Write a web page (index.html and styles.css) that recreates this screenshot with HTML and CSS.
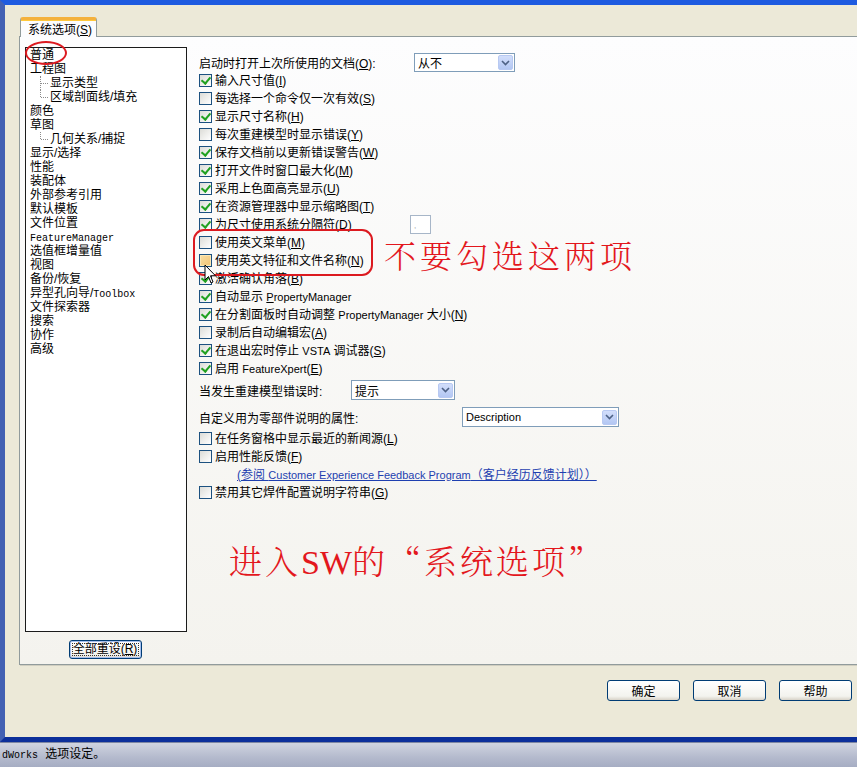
FILE: index.html
```html
<!DOCTYPE html>
<html>
<head>
	<meta charset="utf-8">
	<title>系统选项 - 普通</title>
	<link rel="stylesheet" href="styles.css">
</head>
<body>
	<div class="window">
		<div class="tab">系统选项(<u>S</u>)</div>
		<div class="panel">
			<div class="left">
				<ul class="tree">
					<li>普通</li>
					<li>工程图</li>
					<li class="sub">显示类型</li>
					<li class="sub last">区域剖面线/填充</li>
					<li>颜色</li>
					<li>草图</li>
					<li class="sub last">几何关系/捕捉</li>
					<li>显示/选择</li>
					<li>性能</li>
					<li>装配体</li>
					<li>外部参考引用</li>
					<li>默认模板</li>
					<li>文件位置</li>
					<li><span class="en">FeatureManager</span></li>
					<li>选值框增量值</li>
					<li>视图</li>
					<li>备份/恢复</li>
					<li>异型孔向导/<span class="en">Toolbox</span></li>
					<li>文件探索器</li>
					<li>搜索</li>
					<li>协作</li>
					<li>高级</li>
				</ul>
				<button class="btn reset">全部重设(<u>R</u>)</button>
			</div>
			<div class="right">
				<div class="line first">
					<span class="lbl open_doc">启动时打开上次所使用的文档(<u>O</u>):</span>
					<div class="combo never">从不<span class="arrow"><svg width="9" height="6" viewBox="0 0 9 6"><path d="M1 1 L4.5 4.5 L8 1" fill="none" stroke="#4D6185" stroke-width="1.6"/></svg></span></div>
				</div>
				<div class="chk"><span class="cb on"></span>输入尺寸值(<u>I</u>)</div>
				<div class="chk"><span class="cb"></span>每选择一个命令仅一次有效(<u>S</u>)</div>
				<div class="chk"><span class="cb on"></span>显示尺寸名称(<u>H</u>)</div>
				<div class="chk"><span class="cb"></span>每次重建模型时显示错误(<u>Y</u>)</div>
				<div class="chk"><span class="cb on"></span>保存文档前以更新错误警告(<u>W</u>)</div>
				<div class="chk"><span class="cb on"></span>打开文件时窗口最大化(<u>M</u>)</div>
				<div class="chk"><span class="cb on"></span>采用上色面高亮显示(<u>U</u>)</div>
				<div class="chk"><span class="cb on"></span>在资源管理器中显示缩略图(<u>T</u>)</div>
				<div class="chk sep_row">
					<span class="sep_lbl"><span class="cb on"></span>为尺寸使用系统分隔符(<u>D</u>)</span>
					<span class="sep_box">,</span>
				</div>
				<div class="chk"><span class="cb"></span>使用英文菜单(<u>M</u>)</div>
				<div class="chk"><span class="cb hot"></span>使用英文特征和文件名称(<u>N</u>)</div>
				<div class="chk"><span class="cb on"></span>激活确认角落(<u>B</u>)</div>
				<div class="chk"><span class="cb on"></span>自动显示 <span class="lt"><u>P</u>ropertyManager</span></div>
				<div class="chk"><span class="cb on"></span>在分割面板时自动调整 <span class="lt">PropertyManager</span> 大小(<u>N</u>)</div>
				<div class="chk"><span class="cb"></span>录制后自动编辑宏(<u>A</u>)</div>
				<div class="chk"><span class="cb on"></span>在退出宏时停止 <span class="lt">VSTA</span> 调试器(<u>S</u>)</div>
				<div class="chk"><span class="cb on"></span>启用 <span class="lt">FeatureXpert</span>(<u>E</u>)</div>
				<div class="line rebuild">
					<span class="lbl rebuild_lbl">当发生重建模型错误时:</span>
					<div class="combo prompt">提示<span class="arrow"><svg width="9" height="6" viewBox="0 0 9 6"><path d="M1 1 L4.5 4.5 L8 1" fill="none" stroke="#4D6185" stroke-width="1.6"/></svg></span></div>
				</div>
				<div class="line desc">
					<span class="lbl desc_lbl">自定义用为零部件说明的属性:</span>
					<div class="combo description"><span class="lt">Description</span><span class="arrow"><svg width="9" height="6" viewBox="0 0 9 6"><path d="M1 1 L4.5 4.5 L8 1" fill="none" stroke="#4D6185" stroke-width="1.6"/></svg></span></div>
				</div>
				<div class="chk gap"><span class="cb"></span>在任务窗格中显示最近的新闻源(<u>L</u>)</div>
				<div class="chk"><span class="cb"></span>启用性能反馈(<u>F</u>)</div>
				<div class="chk link_row"><a class="link">(参阅 <span class="lt">Customer Experience Feedback Program</span>（客户经历反馈计划））</a></div>
				<div class="chk"><span class="cb"></span>禁用其它焊件配置说明字符串(<u>G</u>)</div>
			</div>

			<div class="mark oval"></div>
			<div class="mark box"></div>
			<div class="note note_top">不要勾选这两项</div>
			<div class="note note_bottom">进入<span class="sw">SW</span>的“系统选项”</div>
			<svg class="cursor" width="13" height="21" viewBox="0 0 13 21"><path d="M1 1 L1 16 L4.5 12.5 L7 19 L9 18 L6.5 11.8 L11.5 11.8 Z" fill="#fff" stroke="#000" stroke-width="1"/></svg>
		</div>
		<div class="actions">
			<button class="btn">确定</button>
			<button class="btn">取消</button>
			<button class="btn">帮助</button>
		</div>
	</div>
	<div class="status"><span class="en">dWorks</span> 选项设定。</div>
</body>
</html>
```

FILE: styles.css
```css
*{
	box-sizing: border-box;
}
body{
	margin: 0;
	width: 857px;
	height: 767px;
	overflow: hidden;
	background-color: #ece9d8;
	font-family: "Liberation Sans", "Noto Sans CJK SC", sans-serif;
	font-size: 12px;
	color: #000;
}
u{
	text-decoration: underline;
	text-underline-offset: 1px;
}
.en{
	font-family: "Liberation Mono", monospace;
	font-size: 10px;
}
.lt{
	font-size: 11px;
}
.window{
	height: 742px;
	border-top: 5px solid #1e5be0;
	border-left: 5px solid #4361b3;
	border-bottom: 5px solid #0c2f9a;
	padding: 12px 0 0 14px;
	overflow: hidden;
}
.tab{
	position: relative;
	z-index: 1;
	width: 77px;
	height: 20px;
	margin-left: 1px;
	margin-bottom: -1px;
	padding: 3px 0 0 7px;
	line-height: 14px;
	background-color: #fcfcfe;
	border: 1px solid #919b9c;
	border-bottom: none;
	border-top: 3px solid #f4b13c;
	border-radius: 3px 3px 0 0;
	box-shadow: inset 0 1px 0 #ffc83c;
}
.panel{
	position: relative;
	display: flex;
	width: 845px;
	height: 629px;
	padding: 10px 0 0 5px;
	border: 1px solid #919b9c;
	background: linear-gradient(#fdfdfe, #f4f3ee);
	box-shadow: 1px 1px 0 #d0cec0;
}
.left{
	display: flex;
	flex-direction: column;
	align-items: center;
	width: 162px;
}
.tree{
	width: 162px;
	height: 585px;
	margin: 0;
	padding: 0;
	list-style: none;
	background-color: #fff;
	border: 1px solid #1b1b1b;
}
.tree li{
	position: relative;
	height: 14px;
	line-height: 14px;
	padding-left: 4px;
	white-space: nowrap;
}
.tree .sub{
	padding-left: 24px;
}
.tree .sub::before{
	content: '';
	position: absolute;
	left: 14px;
	top: 0;
	height: 100%;
	border-left: 1px dotted #8c8c8c;
}
.tree .sub.last::before{
	height: 50%;
}
.tree .sub::after{
	content: '';
	position: absolute;
	left: 15px;
	top: 50%;
	width: 7px;
	border-top: 1px dotted #8c8c8c;
}
.btn{
	width: 73px;
	height: 21px;
	padding: 0;
	font-family: "Liberation Sans", "Noto Sans CJK SC", sans-serif;
	font-size: 12px;
	color: #000;
	border: 1px solid #003c74;
	border-radius: 3px;
	background: linear-gradient(#ffffff, #f3f3ee 80%, #d8d3c8);
}
.reset{
	width: 73px;
	height: 19px;
	margin-top: 8px;
	margin-left: -2px;
	line-height: 15px;
	box-shadow: inset 0 0 0 1px #a6c0ee;
	outline: 1px dotted #333;
	outline-offset: -4px;
}
.right{
	margin-left: 12px;
	padding-top: 6px;
	width: 640px;
}
.line{
	display: flex;
	align-items: center;
	height: 19px;
}
.chk{
	height: 18px;
	line-height: 18px;
	white-space: nowrap;
}
.cb{
	position: relative;
	display: inline-block;
	width: 13px;
	height: 13px;
	margin-right: 3px;
	vertical-align: -2px;
	border: 1px solid #1c5180;
	background: linear-gradient(135deg, #dcdcd7, #ffffff);
}
.cb.on::after{
	content: '';
	position: absolute;
	left: 3px;
	top: 0;
	width: 4px;
	height: 7px;
	border: solid #21a121;
	border-width: 0 2px 2px 0;
	transform: rotate(40deg);
}
.cb.hot{
	background: linear-gradient(135deg, #f8dfa6, #f3c471);
	box-shadow: inset 0 0 0 1px #fbe7b4;
}
.combo{
	position: relative;
	display: flex;
	align-items: center;
	padding-left: 3px;
	background-color: #fff;
	border: 1px solid #7f9db9;
}
.arrow{
	display: flex;
	align-items: center;
	justify-content: center;
	width: 15px;
	height: 15px;
	margin-left: auto;
	margin-right: 1px;
	border-radius: 2px;
	border: 1px solid #b8c9f2;
	background: linear-gradient(#d2defb, #b3c7f3);
}
.open_doc{
	width: 215px;
}
.never{
	width: 101px;
	height: 19px;
}
.sep_row{
	display: grid;
	grid-template-columns: 211px 21px;
	align-items: center;
}
.sep_lbl{
	display: block;
}
.sep_box{
	height: 19px;
	margin-top: -1px;
	padding: 6px 0 0 3px;
	font-size: 8px;
	line-height: 8px;
	color: #999;
	background-color: #fff;
	border: 1px solid #a7b6c8;
}
.rebuild{
	height: 22px;
	margin-top: 1px;
}
.rebuild_lbl{
	width: 152px;
}
.prompt{
	width: 104px;
	height: 20px;
}
.desc{
	height: 22px;
	margin-top: 5px;
}
.desc_lbl{
	width: 263px;
}
.description{
	width: 157px;
	height: 20px;
}
.gap{
	margin-top: 2px;
}
.link_row{
	padding-left: 38px;
}
.link{
	color: #1e3fb0;
	text-decoration: underline;
}
.mark{
	position: absolute;
	border: 2px solid #dc1a20;
}
.oval{
	left: 5px;
	top: 4px;
	width: 42px;
	height: 24px;
	border-radius: 50%;
}
.box{
	left: 173px;
	top: 192px;
	width: 180px;
	height: 47px;
	border-radius: 11px;
}
.note{
	position: absolute;
	color: #e3171d;
	font-family: "AR PL UKai CN", "Noto Serif CJK SC", "Noto Sans CJK SC", serif;
	font-weight: 300;
	line-height: 1;
	white-space: nowrap;
}
.note_top{
	left: 364px;
	top: 201px;
	font-size: 32px;
	letter-spacing: 4px;
}
.note_bottom{
	left: 209px;
	top: 506px;
	font-size: 33px;
	letter-spacing: 3px;
}
.note_bottom .sw{
	font-family: "Liberation Serif", serif;
	font-size: 34px;
	letter-spacing: 0;
}
.cursor{
	position: absolute;
	left: 184px;
	top: 227px;
}
.actions{
	display: flex;
	justify-content: flex-end;
	gap: 13px;
	width: 838px;
	margin-top: 15px;
	padding-right: 5px;
}
.status{
	height: 25px;
	padding: 5px 0 0 2px;
	line-height: 14px;
	font-family: "Liberation Mono", "Noto Sans CJK SC", monospace;
	background: linear-gradient(#d0d4e0, #b4bacd 60%, #a6adc3);
	border-top: 1px solid #7d86a3;
}
```
